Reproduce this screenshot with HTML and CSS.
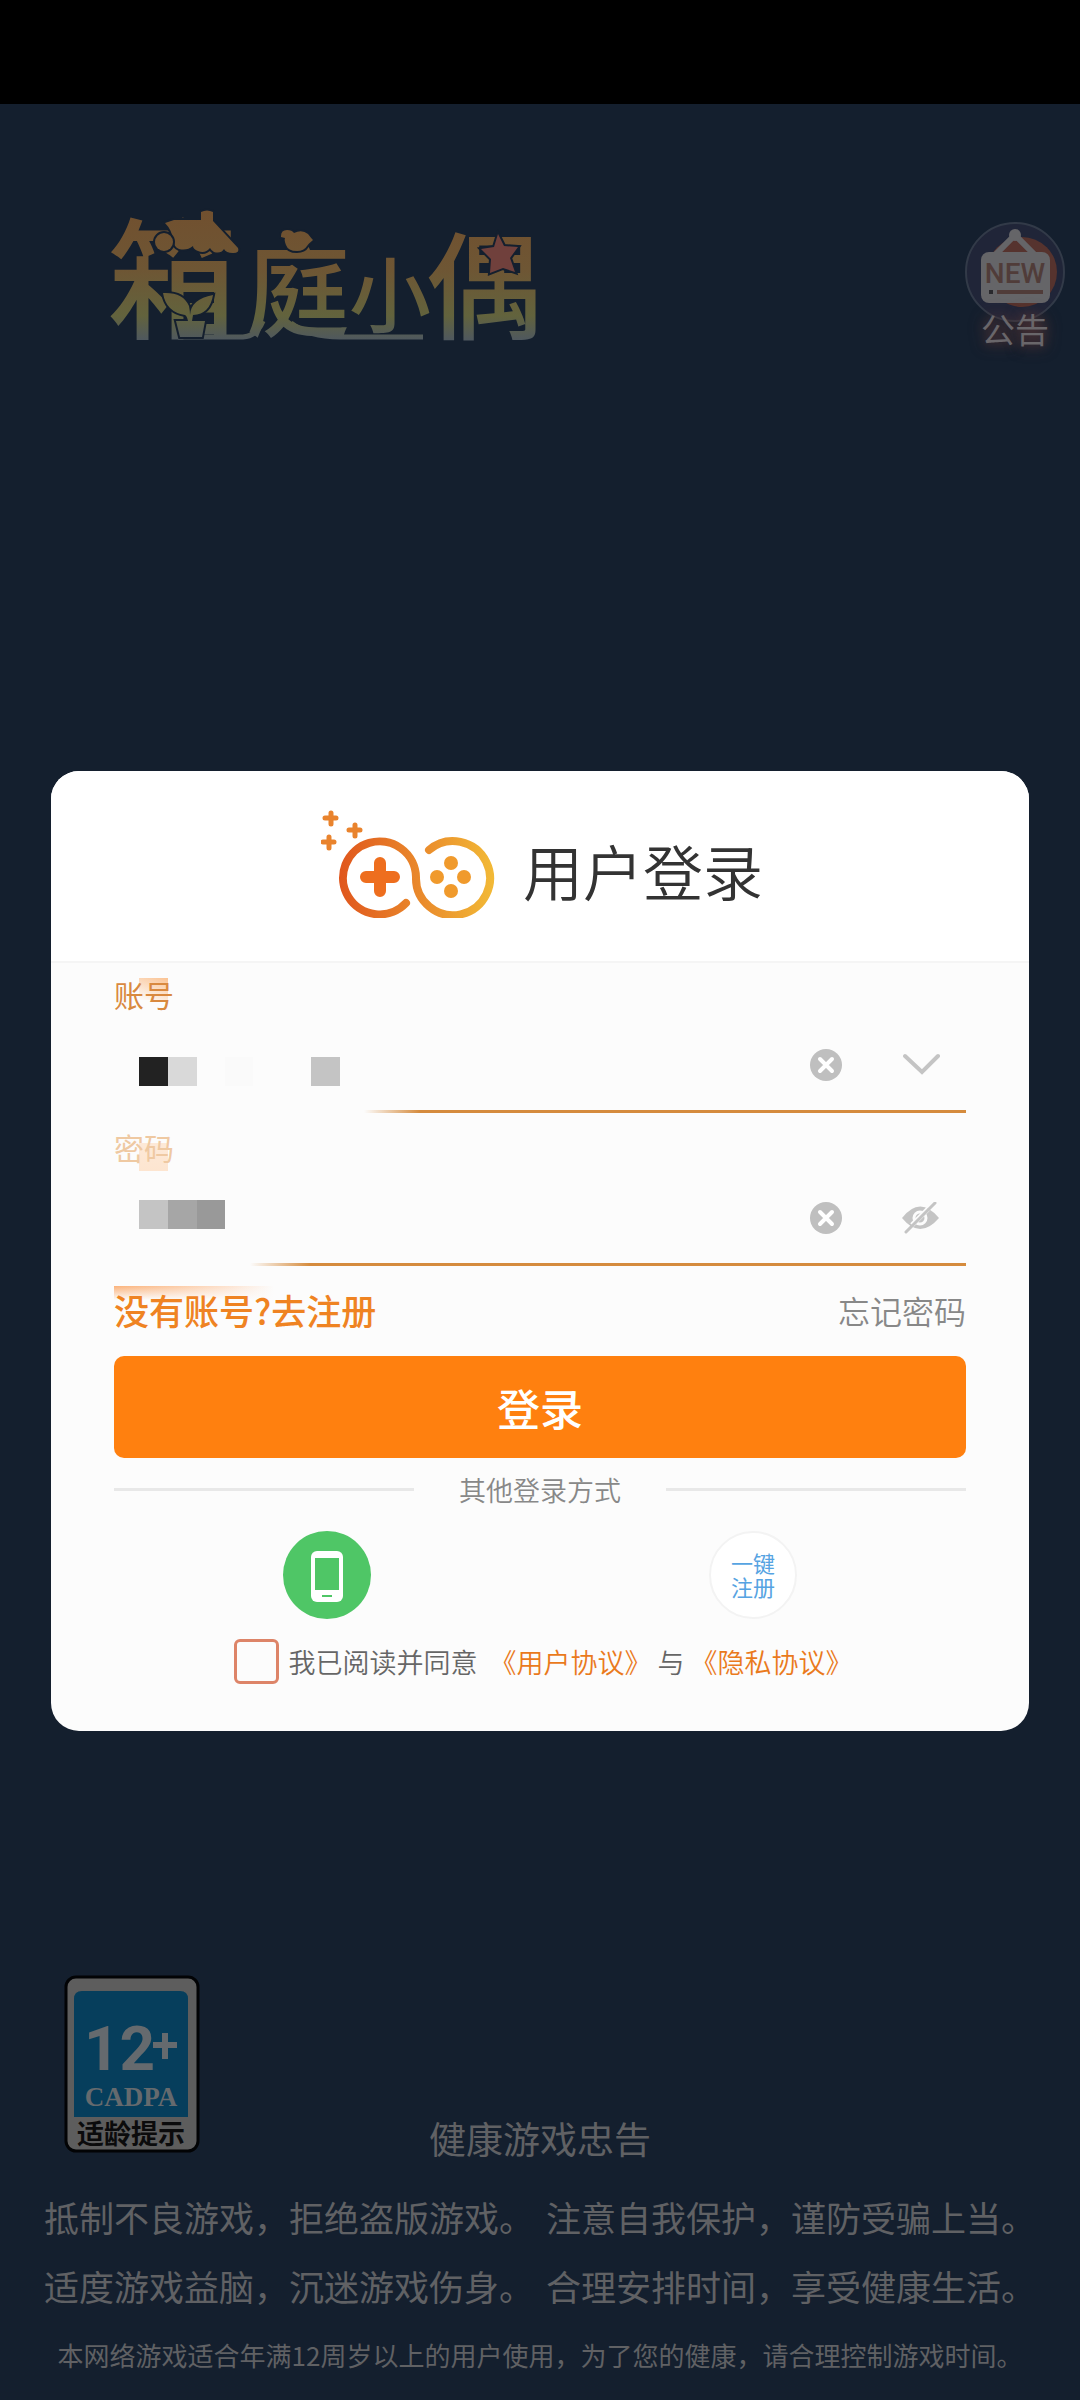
FILE: index.html
```html
<!DOCTYPE html>
<html lang="zh-CN">
<head>
<meta charset="utf-8">
<meta name="viewport" content="width=device-width, initial-scale=1">
<title>箱庭小偶 - 用户登录</title>
<link rel="stylesheet" href="styles.css">
</head>
<body>
<div class="status-bar"></div>

<header class="top">
  <h1 class="brand">
    <svg class="brand-art" viewBox="100 200 450 150" role="img" aria-label="箱庭小偶">
      <defs>
        <linearGradient id="gold" gradientUnits="userSpaceOnUse" x1="0" y1="211" x2="0" y2="342">
          <stop offset="0" stop-color="#71502f"/>
          <stop offset="0.45" stop-color="#6e5634"/>
          <stop offset="0.8" stop-color="#62633d"/>
          <stop offset="1" stop-color="#4d5761"/>
        </linearGradient>
      </defs>
      <g class="brand-text" fill="url(#gold)">
        <text x="107" y="328" font-size="130">箱</text>
        <text x="246" y="329" font-size="104">庭</text>
        <text x="349" y="326" font-size="82">小</text>
        <text x="426" y="330" font-size="116">偶</text>
      </g>
      <!-- cottage roof -->
      <path class="cut" fill="url(#gold)" d="M165 223l9-3 27 0v-8q6-3 12 0v9l25 27q2 5-5 5-7 0-9-4-3 5-10 3-3-2-4-4-5 6-12 3-5-2-5-5-6 5-14 3-5-2-6-9-1-10-8-17z"/>
      <circle class="cut" cx="164" cy="242" r="9" fill="url(#gold)"/>
      <!-- bird -->
      <path class="cut" fill="url(#gold)" d="M281 236q0-6 6-6 5 0 7 3 8-4 14 1 3 4 5 6-5 4-6 6-3 5-10 5-9 0-11-6-2-5-1-7l-4-1z"/>
      <!-- ground line -->
      <path fill="none" stroke="url(#gold)" stroke-width="5" d="M178 337h65q14-1 20-16m28 2q18 14 49 14h83"/>
      <!-- potted plant -->
      <path class="cut" fill="url(#gold)" d="M163 293q20-1 26 13 1 5 1 9 1-16 23-20-3 19-20 20l-1 6h13l-3 16h-22l-4-16h12q-1-5-3-6-19-3-22-22z"/>
      <path class="cut" fill="#70403c" d="M498 234l6 12 14 1-8 11 5 14-12-4-13 5 1-14-10-10 13-2z"/>
    </svg>
  </h1>
  <button class="notice" type="button">
    <svg class="notice-icon" viewBox="0 0 102 102" aria-hidden="true">
      <circle cx="51" cy="51" r="49" fill="#202538" stroke="#323a48" stroke-width="2"/>
      <circle cx="58" cy="51" r="35" fill="#56332e"/>
      <path d="M31 34L51 14 71 34" fill="none" stroke="#656568" stroke-width="6"/>
      <circle cx="51" cy="14" r="6" fill="#656568"/>
      <rect x="17" y="31" width="69" height="51" rx="8" fill="#656568"/>
      <text x="51" y="62" text-anchor="middle" class="notice-new">NEW</text>
      <path d="M25 71h4" stroke="#29292d" stroke-width="4"/>
      <path d="M33 71h46" stroke="#503c39" stroke-width="4"/>
    </svg>
    <span class="notice-text">公告</span>
  </button>
</header>

<main class="card">
  <div class="card-head">
    <svg class="pad-logo" viewBox="320 810 174 108" aria-hidden="true">
      <defs>
        <linearGradient id="pad" gradientUnits="userSpaceOnUse" x1="339" y1="0" x2="492" y2="0">
          <stop offset="0" stop-color="#e0571d"/>
          <stop offset="0.5" stop-color="#e9872b"/>
          <stop offset="1" stop-color="#f2b936"/>
        </linearGradient>
      </defs>
      <g fill="none" stroke="url(#pad)" stroke-linecap="round" stroke-width="8">
        <path d="M405 903A36.500 36.500 0 1 1 415 877A37 37 0 1 0 428 850"/>
      </g>
      <path d="M379 863v28M365 877h28" stroke="#ee6e1e" stroke-width="12" stroke-linecap="round"/>
      <g fill="#f09a2c"><circle cx="450" cy="863" r="7"/><circle cx="450" cy="891" r="7"/><circle cx="436" cy="877" r="7"/><circle cx="463" cy="877" r="7"/></g>
      <path d="M330 813v11M324 818h11M354 825v11M348 830h11M328 837v11M322 842h11" stroke="#e9832d" stroke-width="5" stroke-linecap="round"/>
    </svg>
    <h2 class="card-title">用户登录</h2>
  </div>

  <form class="form">
    <div class="field field-account">
      <label class="field-label" for="account">账号</label>
      <div class="field-row">
        <input class="field-input" id="account" type="text">
        <button class="icon-btn clear" type="button" aria-label="清除账号">
          <svg viewBox="0 0 32 32"><circle cx="16" cy="16" r="16" fill="#bfbfbf"/><path d="M10 10l12 12M22 10L10 22" stroke="#fff" stroke-width="4" stroke-linecap="round"/></svg>
        </button>
        <button class="icon-btn" type="button" aria-label="选择账号">
          <svg viewBox="0 0 38 32"><path d="M3 7l17 16L36 7" fill="none" stroke="#c4c4c4" stroke-width="4" stroke-linecap="round"/></svg>
        </button>
      </div>
    </div>
    <div class="field field-password">
      <label class="field-label" for="password">密码</label>
      <div class="field-row">
        <input class="field-input" id="password" type="password">
        <button class="icon-btn clear" type="button" aria-label="清除密码">
          <svg viewBox="0 0 32 32"><circle cx="16" cy="16" r="16" fill="#bfbfbf"/><path d="M10 10l12 12M22 10L10 22" stroke="#fff" stroke-width="4" stroke-linecap="round"/></svg>
        </button>
        <button class="icon-btn" type="button" aria-label="显示密码">
          <svg viewBox="0 0 38 32"><path d="M0 16Q18-7 37 16 18 38 0 16z" fill="#c4c4c4"/><circle cx="18" cy="16" r="6" fill="none" stroke="#fcfcfc" stroke-width="3"/><path d="M10 23L26 7" stroke="#fcfcfc" stroke-width="5"/><path d="M4 30L33 1" stroke="#c4c4c4" stroke-width="3" stroke-linecap="round"/></svg>
        </button>
      </div>
    </div>

    <div class="links">
      <a class="register" href="#register">没有账号?去注册</a>
      <a class="forgot" href="#forgot">忘记密码</a>
    </div>
    <button class="submit" type="submit">登录</button>

    <div class="divider">其他登录方式</div>
    <div class="methods">
      <button class="method phone" type="button" aria-label="手机登录">
        <svg viewBox="0 0 88 88"><rect x="28" y="20" width="32" height="51" rx="6" fill="#fff"/><path d="M32 27h24v32H32z" fill="#4fc666"/><path d="M39 65h10" stroke="#4fc666" stroke-width="2"/></svg>
      </button>
      <button class="method quick" type="button">一键<br>注册</button>
    </div>

    <div class="agree">
      <input class="agree-box" id="agree" type="checkbox">
      <label class="agree-text" for="agree">我已阅读并同意</label>
      <a class="agree-link" href="#terms">《用户协议》</a>
      <span>与</span>
      <a class="agree-link" href="#privacy">《隐私协议》</a>
    </div>
  </form>
</main>

<footer class="advice">
  <div class="advice-top">
    <svg class="age-badge" viewBox="0 0 136 178" role="img" aria-label="12+ CADPA 适龄提示">
      <rect x="2" y="2" width="132" height="174" rx="10" fill="#5d5d5d" stroke="#020305" stroke-width="3"/>
      <path d="M10 142V24q0-8 8-8h98q8 0 8 8v118z" fill="#063e5c"/>
      <text class="age-num" x="20" y="95">12</text>
      <path d="M89 70h24M101 58v26" stroke="#656a6e" stroke-width="6"/>
      <text class="age-org" x="67" y="131" text-anchor="middle">CADPA</text>
      <text class="age-tip" x="67" y="169" text-anchor="middle">适龄提示</text>
    </svg>
    <h3 class="advice-title">健康游戏忠告</h3>
  </div>
  <p class="advice-line"><span>抵制不良游戏，拒绝盗版游戏。</span><span>注意自我保护，谨防受骗上当。</span></p>
  <p class="advice-line"><span>适度游戏益脑，沉迷游戏伤身。</span><span>合理安排时间，享受健康生活。</span></p>
  <p class="advice-note">本网络游戏适合年满12周岁以上的用户使用，为了您的健康，请合理控制游戏时间。</p>
</footer>
</body>
</html>
```
FILE: styles.css
```css
* { box-sizing: border-box; }

body {
  margin: 0;
  min-height: 100vh;
  display: flex;
  flex-direction: column;
  background: #141f2e;
  font-family: "Noto Sans CJK SC", "Noto Sans", sans-serif;
}

h1, h2, h3, p { margin: 0; font-weight: 400; }
a { text-decoration: none; }
svg { display: block; }

button {
  margin: 0;
  padding: 0;
  border: 0;
  background: none;
  font-family: inherit;
  cursor: pointer;
}

.status-bar { height: 104px; background: #000; }

/* top: brand and notice */
.top {
  display: flex;
  justify-content: space-between;
  align-items: flex-start;
  min-height: 667px;
  padding: 96px 14px 0 100px;
}
.brand-art { width: 450px; height: 150px; overflow: visible; }
.brand-text { font-weight: 500; }
.cut { stroke: #141f2e; stroke-width: 4; paint-order: stroke; }

.notice {
  display: flex;
  flex-direction: column;
  align-items: center;
  padding-top: 21px;
}
.notice-icon { width: 102px; height: 102px; }
.notice-new {
  font: 500 28px Roboto, sans-serif;
  fill: #503c39;
}
.notice-text {
  margin-top: -12px;
  line-height: 36px;
  font-size: 34px;
  color: #69666a;
  text-shadow: 0 0 16px #6b3d38, 0 0 10px #3a2a30;
}

/* login card */
.card {
  margin: 0 51px;
  border-radius: 28px;
  overflow: hidden;
  background: #fcfcfc;
}
.card-head {
  display: flex;
  justify-content: center;
  align-items: center;
  gap: 28px;
  height: 192px;
  padding-left: 4px;
  background: #fff;
  border-bottom: 2px solid #f5f5f5;
}
.pad-logo { width: 174px; height: 108px; margin-top: -4px; }
.card-title { padding-top: 8px; font-size: 60px; line-height: 72px; font-weight: 350; color: #333; }

.form { padding: 0 63px 47px; margin-top: -3px; }

.field {
  padding-bottom: 3px;
  background: linear-gradient(90deg, transparent 250px, #d58b3d 306px) bottom / 100% 3px no-repeat;
}
.field-password {
  background-image: linear-gradient(90deg, transparent 136px, #d58b3d 196px);
}
.field-label {
  display: block;
  width: 62px;
  padding: 18px 0 10px;
  font-size: 30px;
  line-height: 32px;
  color: #d9893f;
  background: linear-gradient(200deg, #fbc393, #fcfcfc) 25px 18px / 29px 22px no-repeat;
}
.field-password .field-label {
  color: #efc9a2;
  background: linear-gradient(#fde9d8, #fde5d0) 25px 30px / 29px 28px no-repeat;
}
.field-row {
  display: flex;
  align-items: center;
  gap: 60px;
  height: 90px;
  padding-right: 26px;
}
.field-input {
  flex: 1;
  min-width: 0;
  height: 60px;
  padding: 0 25px;
  border: 0;
  outline: 0;
  font-size: 32px;
  background: linear-gradient(90deg, #222 29px, #d9d9d9 29px 58px, transparent 58px 86px, #fafafa 86px 114px, transparent 114px 172px, #c4c4c4 172px) 25px 22px / 201px 29px no-repeat;
}
.field-password .field-input {
  background: linear-gradient(90deg, #c4c4c4 29px, #a6a6a6 29px 58px, #999 58px) 25px 12px / 86px 29px no-repeat;
}
.icon-btn { width: 38px; height: 32px; }
.icon-btn.clear { width: 32px; }

.links {
  display: flex;
  justify-content: space-between;
  align-items: center;
  height: 90px;
  padding-bottom: 3px;
  background:
    linear-gradient(transparent, #fcfcfc) 0 20px / 100% 14px no-repeat,
    linear-gradient(90deg, #fbb27a, #fcc9a2 58px, #fde3d0 115px, transparent 160px) 0 20px / 100% 14px no-repeat;
}
.register { font-size: 35px; line-height: 40px; font-weight: 500; color: #ef8322; }
.forgot { font-size: 32px; line-height: 40px; font-weight: 350; color: #888; }

.submit {
  display: block;
  width: 100%;
  height: 102px;
  border-radius: 10px;
  background: #ff800f;
  color: #fff;
  font-size: 43px;
  font-weight: 500;
  line-height: 60px;
}

.divider {
  display: flex;
  justify-content: space-between;
  align-items: center;
  height: 63px;
  font-size: 27px;
  font-weight: 350;
  line-height: 32px;
  color: #888;
}
.divider::before,
.divider::after {
  content: "";
  width: 300px;
  height: 3px;
  background: #e8e8e8;
}

.methods {
  display: grid;
  grid-template-columns: 1fr 1fr;
  justify-items: center;
  padding: 10px 0 20px;
}
.method { width: 88px; height: 88px; border-radius: 50%; }
.phone { background: #4fc666; }
.quick {
  padding-bottom: 2px;
  background: #fff;
  border: 2px solid #f3f3f3;
  color: #56a3e2;
  font-size: 22px;
  line-height: 24px;
}

.agree {
  display: flex;
  align-items: center;
  justify-content: center;
  gap: 6px;
  height: 45px;
  padding-left: 6px;
  font-size: 27px;
  font-weight: 350;
  line-height: 32px;
  color: #666;
}
.agree-box {
  appearance: none;
  width: 45px;
  height: 45px;
  margin: 0;
  border: 3px solid #dd8468;
  border-radius: 6px;
}
.agree-text { padding: 0 6px 0 4px; }
.agree-link { color: #ea7a1c; }

/* footer */
.advice {
  margin-top: auto;
  padding-bottom: 11px;
  text-align: center;
  color: #606164;
}
.advice-top {
  display: grid;
  grid-template-columns: 1fr auto 1fr;
  align-items: end;
  padding: 0 64px 24px;
}
.age-badge { width: 136px; height: 178px; margin-bottom: 5px; }
.age-num { font: 700 62px Roboto, sans-serif; fill: #656a6e; }
.age-org { font: 700 27px "Liberation Serif", serif; fill: #656a6e; }
.age-tip { font-size: 27px; font-weight: 700; fill: #0b0b0c; }
.advice-title { font-size: 37px; line-height: 40px; }
.advice-line {
  display: flex;
  justify-content: center;
  gap: 12px;
  font-size: 35px;
  line-height: 69px;
}
.advice-note { font-size: 26px; line-height: 69px; }
```
